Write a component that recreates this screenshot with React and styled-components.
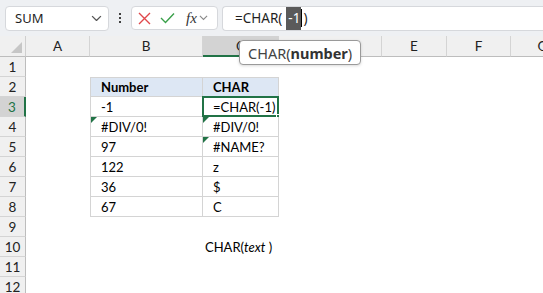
import React from 'react';
import styled, { createGlobalStyle } from 'styled-components';

const GlobalStyle = createGlobalStyle`
  html, body {
    margin: 0;
    padding: 0;
    background: #ffffff;
    overflow: hidden;
  }
  body {
    font-family: "Lato", "Liberation Sans", sans-serif;
  }
`;

const Page = styled.div`
  width: 543px;
  height: 293px;
  display: flex;
  flex-direction: column;
  background: #ffffff;
  overflow: hidden;
`;

const Toolbar = styled.div`
  height: 36px;
  flex: none;
  display: flex;
  align-items: center;
  padding: 0 0 0 5px;
  background: #eef0f3;
  box-sizing: border-box;
`;

const NameBox = styled.div`
  width: 104px;
  height: 25px;
  box-sizing: border-box;
  display: flex;
  align-items: center;
  justify-content: space-between;
  padding: 0 6px 0 9px;
  background: #ffffff;
  border: 1px solid #d6d8dc;
  border-radius: 4px;
  font-family: "Noto Sans", "Open Sans", sans-serif;
  font-size: 13px;
  color: #1f1f1f;
`;

const Dots = styled.div`
  width: 22px;
  display: flex;
  flex-direction: column;
  align-items: center;
  gap: 2px;
  span {
    width: 2px;
    height: 2px;
    background: #404040;
  }
`;

const ButtonGroup = styled.div`
  width: 87px;
  height: 24px;
  box-sizing: border-box;
  display: flex;
  align-items: center;
  padding: 0 0 0 6px;
  gap: 9px;
  background: #ffffff;
  border: 1px solid #d6d8dc;
  border-radius: 4px;
`;

const Fx = styled.span`
  font-family: "Liberation Serif", "DejaVu Serif", serif;
  font-style: italic;
  font-size: 15px;
  color: #333;
  margin-left: 2px;
  display: flex;
  align-items: center;
  gap: 2px;
`;

const FormulaBox = styled.div`
  flex: 1;
  margin-left: 4px;
  height: 25px;
  box-sizing: border-box;
  display: flex;
  align-items: center;
  padding-left: 12px;
  background: #ffffff;
  border: 1px solid #d6d8dc;
  border-right: none;
  border-radius: 4px 0 0 4px;
  font-family: "Noto Sans", "Open Sans", sans-serif;
  font-size: 13.5px;
  color: #1f1f1f;
`;

const ArgHighlight = styled.span`
  background: #5a5a5a;
  color: #ffffff;
  padding: 2px 1px 3px 2px;
  margin-left: 4px;
`;

const Caret = styled.span`
  display: inline-block;
  width: 1px;
  height: 18px;
  background: #000;
  margin: 0 1px 0 0;
  vertical-align: middle;
`;

const SheetArea = styled.div`
  position: relative;
  flex: 1;
`;

const Grid = styled.div`
  display: grid;
  grid-template-columns: 26px 64px 113px 76px 103px 65px 64px 64px;
  grid-template-rows: 21px;
  grid-auto-rows: 20px;
  font-size: 13px;
  color: #000;
`;

const Corner = styled.div`
  position: relative;
  background: #f0f0f0;
  border-right: 1px solid #cfcfcf;
  border-bottom: 1px solid #bdbdbd;
  box-sizing: border-box;
  &::after {
    content: '';
    position: absolute;
    right: 3px;
    bottom: 3px;
    width: 0;
    height: 0;
    border-left: 11px solid transparent;
    border-bottom: 11px solid #c6c6c6;
  }
`;

const ColHeader = styled.div`
  display: flex;
  align-items: center;
  justify-content: center;
  box-sizing: border-box;
  background: ${p => (p.$active ? '#d3d3d3' : '#f0f0f0')};
  border-right: 1px solid #d4d4d4;
  border-bottom: ${p => (p.$active ? '2px solid #217346' : '1px solid #bdbdbd')};
  color: #222;
  font-size: 13.5px;
`;

const RowHeader = styled.div`
  display: flex;
  align-items: center;
  justify-content: center;
  box-sizing: border-box;
  background: ${p => (p.$active ? '#d3d3d3' : '#f0f0f0')};
  border-right: ${p => (p.$active ? '2px solid #217346' : '1px solid #bdbdbd')};
  border-bottom: 1px solid #d4d4d4;
  color: ${p => (p.$active ? '#217346' : '#222')};
  font-size: 13.5px;
`;

const Cell = styled.div`
  position: relative;
  display: flex;
  align-items: center;
  box-sizing: border-box;
  padding-left: ${p => (p.$table ? '10px' : '2px')};
  white-space: nowrap;
  background: ${p => (p.$head ? '#dde7f4' : '#ffffff')};
  font-weight: ${p => (p.$head ? 700 : 400)};
  border-right: ${p => (p.$table ? '1px solid #d4d4d4' : 'none')};
  border-bottom: ${p => (p.$table ? '1px solid #d4d4d4' : 'none')};
  border-top: ${p => (p.$top ? '1px solid #d4d4d4' : 'none')};
  border-left: ${p => (p.$left ? '1px solid #d4d4d4' : 'none')};
  em {
    font-style: italic;
  }
`;

const Selection = styled.div`
  position: absolute;
  left: -1px;
  top: -1px;
  right: -1px;
  bottom: -1px;
  border: 2px solid #217346;
  pointer-events: none;
  &::after {
    content: '';
    position: absolute;
    right: -4px;
    bottom: -4px;
    width: 5px;
    height: 5px;
    background: #217346;
    border: 1px solid #fff;
    box-sizing: border-box;
  }
`;

const ErrorMark = styled.span`
  position: absolute;
  left: 0;
  top: 0;
  width: 0;
  height: 0;
  border-top: 6px solid #217346;
  border-right: 6px solid transparent;
`;

const Tooltip = styled.div`
  position: absolute;
  left: 239px;
  top: 4px;
  width: 122px;
  height: 25px;
  box-sizing: border-box;
  display: flex;
  align-items: center;
  padding: 0 0 0 8px;
  background: #ffffff;
  border: 1px solid #9a9a9a;
  border-radius: 4px;
  box-shadow: 0 1px 3px rgba(0, 0, 0, 0.15);
  font-family: "Noto Sans", "Open Sans", sans-serif;
  font-size: 14.5px;
  color: #444;
  b {
    font-weight: 700;
    color: #333;
  }
`;

const Chevron = ({ size = 10, color = '#555' }) => (
  <svg width={size} height={size * 0.6} viewBox="0 0 10 6">
    <path d="M1 1 L5 5 L9 1" fill="none" stroke={color} strokeWidth="1.2" />
  </svg>
);

const CrossIcon = () => (
  <svg width="13" height="13" viewBox="0 0 13 13">
    <path d="M1 1 L12 12 M12 1 L1 12" stroke="#e0484b" strokeWidth="1.4" fill="none" />
  </svg>
);

const CheckIcon = () => (
  <svg width="15" height="12" viewBox="0 0 15 12">
    <path d="M1 6 L5.5 10.5 L14 1.5" stroke="#3aa04a" strokeWidth="1.4" fill="none" />
  </svg>
);

const columns = ['A', 'B', 'C', 'D', 'E', 'F', 'G'];

const tableData = [
  ['Number', 'CHAR'],
  ['-1', '=CHAR(-1)'],
  ['#DIV/0!', '#DIV/0!'],
  ['97', '#NAME?'],
  ['122', 'z'],
  ['36', '$'],
  ['67', 'C'],
];

const errorCells = { '4-1': true, '4-2': true, '5-2': true };

function renderCell(row, col) {
  const key = `${row}-${col}`;
  const inTable = row >= 2 && row <= 8 && (col === 1 || col === 2);
  if (inTable) {
    const value = tableData[row - 2][col - 1];
    return (
      <Cell key={key} $table $head={row === 2} $top={row === 2} $left={col === 1}>
        {errorCells[key] && <ErrorMark />}
        {value}
        {row === 3 && col === 2 && <Selection />}
      </Cell>
    );
  }
  if (row === 10 && col === 2) {
    return (
      <Cell key={key}>
        CHAR(<em>text</em>&nbsp;)
      </Cell>
    );
  }
  return <Cell key={key} />;
}

const App = () => {
  const rows = Array.from({ length: 12 }, (_, i) => i + 1);
  return (
    <>
      <GlobalStyle />
      <Page>
        <Toolbar>
          <NameBox>
            <span>SUM</span>
            <Chevron size={11} />
          </NameBox>
          <Dots>
            <span />
            <span />
            <span />
          </Dots>
          <ButtonGroup>
            <CrossIcon />
            <CheckIcon />
            <Fx>
              fx
              <Chevron size={9} color="#888" />
            </Fx>
          </ButtonGroup>
          <FormulaBox>
            =CHAR(
            <ArgHighlight>-1</ArgHighlight>
            <Caret />)
          </FormulaBox>
        </Toolbar>
        <SheetArea>
          <Grid>
            <Corner />
            {columns.map(c => (
              <ColHeader key={c} $active={c === 'C'}>
                {c}
              </ColHeader>
            ))}
            {rows.map(r => (
              <React.Fragment key={r}>
                <RowHeader $active={r === 3}>{r}</RowHeader>
                {columns.map((c, ci) => renderCell(r, ci))}
              </React.Fragment>
            ))}
          </Grid>
          <Tooltip>
            CHAR(<b>number</b>)
          </Tooltip>
        </SheetArea>
      </Page>
    </>
  );
};

export default App;
